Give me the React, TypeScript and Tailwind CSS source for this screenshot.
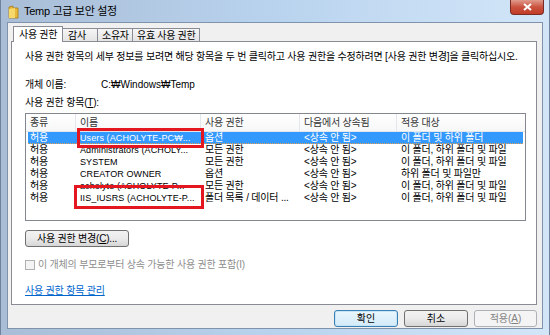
import React from "react";

const font = "font-['Liberation_Sans','Noto_Sans_CJK_KR',sans-serif]";

const rows = [
	["허용", "Users (ACHOLYTE-PC₩...", "옵션", "<상속 안 됨>", "이 폴더 및 하위 폴더"],
	["허용", "Administrators (ACHOLY...", "모든 권한", "<상속 안 됨>", "이 폴더, 하위 폴더 및 파일"],
	["허용", "SYSTEM", "모든 권한", "<상속 안 됨>", "이 폴더, 하위 폴더 및 파일"],
	["허용", "CREATOR OWNER", "옵션", "<상속 안 됨>", "하위 폴더 및 파일만"],
	["허용", "acholyte (ACHOLYTE-P...", "모든 권한", "<상속 안 됨>", "이 폴더, 하위 폴더 및 파일"],
	["허용", "IIS_IUSRS (ACHOLYTE-P...", "폴더 목록 / 데이터 ...", "<상속 안 됨>", "이 폴더, 하위 폴더 및 파일"],
];

const cols = ["w-[50px]", "w-[125px]", "w-[99px]", "w-[97px]", "flex-1"];
const heads = ["종류", "이름", "사용 권한", "다음에서 상속됨", "적용 대상"];

const FolderIcon = () => (
	<svg width="11" height="14" viewBox="0 0 11 14">
		<path d="M1 2 L5 1 L5 3 L10 3 L10 13 L1 13 Z" fill="#e8b83a" stroke="#a67a14" strokeWidth="0.8" />
		<path d="M1 4 L7 3 L7 13 L1 13 Z" fill="#f7d86a" />
	</svg>
);

const tab = "h-[13px] mb-[1px] bg-gradient-to-b from-[#f6f6f6] to-[#e4e4e4] border border-b-0 border-l-0 border-[#898c95] flex items-center whitespace-nowrap tracking-[-0.3px]";

const App: React.FC = () => {
	return (
		<div className={`w-[550px] h-[335px] overflow-hidden ${font} text-[10px] text-black`}>
			<div className="flex flex-col h-full bg-gradient-to-r from-[#a9bdd6] via-[#b9d3ee] to-[#d3e6f8] border-l border-r border-[#6f839c] px-[6px] pb-[6px]">
				{/* title bar */}
				<div className="flex h-[22px] shrink-0">
					<div className="flex items-center gap-[5px] pl-[1px] pt-[1px]">
						<FolderIcon />
						<span className="text-[11px] tracking-[-0.3px] text-black">Temp 고급 보안 설정</span>
					</div>
					<div className="ml-auto mr-[-1px] w-[34px] h-[15px] rounded-b-[4px] border border-t-0 border-[#7a2b24] bg-gradient-to-b from-[#e09a8c] via-[#c9523f] to-[#c23b27] flex items-center justify-center">
						<svg width="9" height="8" viewBox="0 0 9 8">
							<path d="M1 1 L8 7 M8 1 L1 7" stroke="#fff" strokeWidth="2" />
						</svg>
					</div>
				</div>

				{/* client area */}
				<div className="flex-1 flex flex-col bg-[#f0f0f0] border border-[#7f93ad] pl-[3px] pr-[5px] pt-[3px]">
					<div className="flex items-end pl-[2px] h-[16px] relative z-10">
						<div className="h-[16px] w-[50px] px-[5px] bg-white border border-b-0 border-[#898c95] flex items-center whitespace-nowrap tracking-[-0.3px]">사용 권한</div>
						<div className={`${tab} w-[35px] px-[5px]`}>감사</div>
						<div className={`${tab} w-[35px] px-[4px]`}>소유자</div>
						<div className={`${tab} w-[67px] px-[4px]`}>유효 사용 권한</div>
					</div>

					<div className="h-[264px] bg-white border border-[#898c95] mt-[-1px] flex flex-col pl-[13px] pr-[10px] pt-[9px] tracking-[-0.2px]">
						<div className="h-[12px] leading-[12px] whitespace-nowrap">
							사용 권한 항목의 세부 정보를 보려면 해당 항목을 두 번 클릭하고 사용 권한을 수정하려면 [사용 권한 변경]을 클릭하십시오.
						</div>
						<div className="flex mt-[16px] h-[12px] leading-[12px]">
							<span className="w-[76px]">개체 이름:</span>
							<span className="tracking-normal">C:₩Windows₩Temp</span>
						</div>
						<div className="mt-[6px] h-[12px] leading-[12px]">
							사용 권한 항목(<span className="underline">T</span>):
						</div>

						{/* list view */}
						<div className="relative mt-[4px] h-[108px] border border-[#828790] flex flex-col">
							<div className="flex h-[18px] border-b border-[#e3e6ea] bg-gradient-to-b from-white to-[#f6f7f8] items-center">
								{heads.map((h, i) => (
									<div key={h} className={`${cols[i]} h-full flex items-center pl-[4px] ${i < 4 ? "border-r border-[#e3e6ea]" : ""} text-[#333]`}>
										{h}
									</div>
								))}
							</div>
							{rows.map((r, ri) => (
								<div
									key={ri}
									className={`flex h-[12px] leading-[12px] mx-[2px] ${ri === 0 ? "bg-[#3399ff] text-white border-b border-dotted border-[#e0a050]" : ""}`}
								>
									{r.map((c, ci) => (
										<div
											key={ci}
											className={`${cols[ci]} ${ci === 0 ? "ml-[-2px]" : ""} pl-[4px] whitespace-nowrap ${ci === 1 ? "text-[9px] tracking-[0.1px]" : ""}`}
										>
											{c}
										</div>
									))}
								</div>
							))}
							{/* annotation boxes */}
							<div className="absolute left-[51px] top-[14px] w-[127px] h-[20px] border-[3px] border-[#e4161f]" />
							<div className="absolute left-[48px] top-[71px] w-[130px] h-[24px] border-[3px] border-[#e4161f]" />
						</div>

						<div className="mt-[9px] w-[104px] h-[17px] rounded-[3px] border border-[#707070] bg-gradient-to-b from-[#f2f2f2] via-[#ebebeb] to-[#d6d6d6] flex items-center justify-center">
							사용 권한 변경(<span className="underline">C</span>)...
						</div>

						<div className="mt-[10px] flex items-center gap-[3px] text-[#8d8d8d]">
							<div className="w-[10px] h-[10px] border border-[#b1b1b1] bg-[#f4f4f4]" />
							<span>이 개체의 부모로부터 상속 가능한 사용 권한 포함(I)</span>
						</div>

						<div className="mt-[11px] text-[#0066cc] underline">사용 권한 항목 관리</div>
					</div>

					<div className="flex justify-end gap-[6px] mt-[5px]">
						<div className="w-[64px] h-[17px] rounded-[3px] border border-[#3c7fb1] bg-gradient-to-b from-[#eaf6fd] to-[#d3ebf9] flex items-center justify-center shadow-[inset_0_0_0_1px_#c6e4f7]">확인</div>
						<div className="w-[64px] h-[17px] rounded-[3px] border border-[#707070] bg-gradient-to-b from-[#f2f2f2] via-[#ebebeb] to-[#d6d6d6] flex items-center justify-center">취소</div>
						<div className="w-[63px] h-[17px] rounded-[3px] border border-[#adb2b5] bg-[#f4f4f4] text-[#838383] flex items-center justify-center">
							적용(<span className="underline">A</span>)
						</div>
					</div>
				</div>
			</div>
		</div>
	);
};

export default App;
